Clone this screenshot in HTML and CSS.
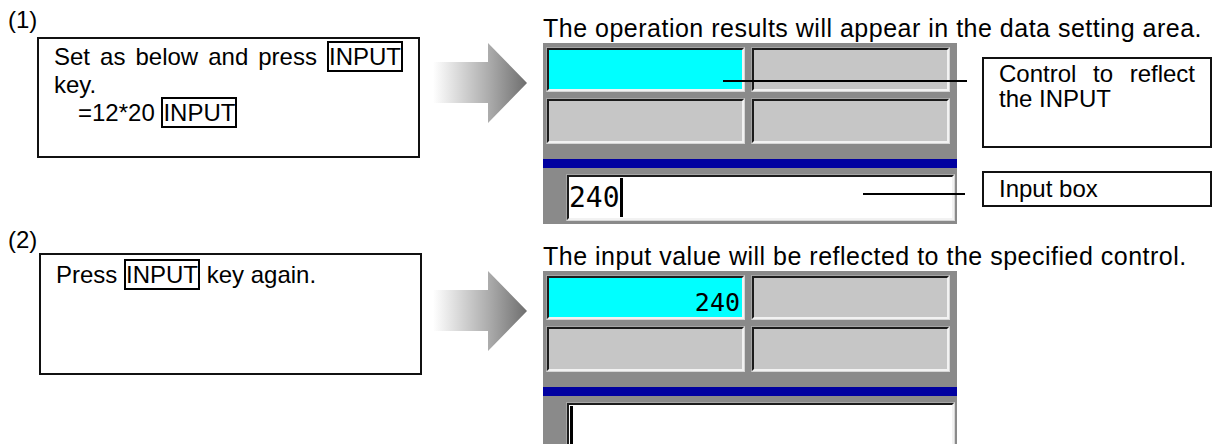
FILE: index.html
```html
<!DOCTYPE html>
<html lang="en">

<head>
    <meta charset="UTF-8">
    <meta name="viewport" content="width=device-width, initial-scale=1.0">
    <title>INPUT key operation</title>
    <link rel="stylesheet" href="styles.css">
</head>

<body>

    <div class="step">
        <div class="left">
            <div class="label">(1)</div>
            <div class="note">
                <p class="note-text">Set as below and press <span class="key">INPUT</span> key.</p>
                <p class="note-line">=12*20 <span class="key">INPUT</span></p>
            </div>
        </div>

        <svg class="arrow" width="95" height="81" viewBox="0 0 95 81">
            <defs>
                <linearGradient id="arrowFill1" x1="0" y1="0" x2="1" y2="0">
                    <stop offset="0" stop-color="#ffffff" />
                    <stop offset="0.6" stop-color="#ababab" />
                    <stop offset="1" stop-color="#6e6e6e" />
                </linearGradient>
            </defs>
            <polygon points="0,19 55,19 55,0 94,40 55,80 55,60 0,60" fill="url(#arrowFill1)" />
        </svg>

        <div class="right">
            <div class="title">The operation results will appear in the data setting area.</div>
            <div class="panel-wrap">
                <div class="panel">
                    <div class="grid">
                        <div class="cell"><div class="cell-in on"></div></div>
                        <div class="cell"><div class="cell-in"></div></div>
                        <div class="cell"><div class="cell-in"></div></div>
                        <div class="cell"><div class="cell-in"></div></div>
                    </div>
                    <div class="bar"></div>
                    <div class="field">
                        <div class="field-in">240<span class="cursor"></span></div>
                    </div>
                </div>

                <div class="callouts">
                    <div class="callout callout-big">Control to reflect the INPUT</div>
                    <div class="callout callout-small">Input box</div>
                </div>

                <span class="leader leader-1"></span>
                <span class="leader leader-2"></span>
            </div>
        </div>
    </div>

    <div class="step step-2">
        <div class="left">
            <div class="label">(2)</div>
            <div class="note">
                <p class="note-text">Press <span class="key">INPUT</span> key again.</p>
            </div>
        </div>

        <svg class="arrow" width="95" height="81" viewBox="0 0 95 81">
            <defs>
                <linearGradient id="arrowFill2" x1="0" y1="0" x2="1" y2="0">
                    <stop offset="0" stop-color="#ffffff" />
                    <stop offset="0.6" stop-color="#ababab" />
                    <stop offset="1" stop-color="#6e6e6e" />
                </linearGradient>
            </defs>
            <polygon points="0,19 55,19 55,0 94,40 55,80 55,60 0,60" fill="url(#arrowFill2)" />
        </svg>

        <div class="right">
            <div class="title">The input value will be reflected to the specified control.</div>
            <div class="panel-wrap">
                <div class="panel">
                    <div class="grid">
                        <div class="cell"><div class="cell-in on value">240</div></div>
                        <div class="cell"><div class="cell-in"></div></div>
                        <div class="cell"><div class="cell-in"></div></div>
                        <div class="cell"><div class="cell-in"></div></div>
                    </div>
                    <div class="bar"></div>
                    <div class="field">
                        <div class="field-in"><span class="cursor cursor-empty"></span></div>
                    </div>
                </div>
            </div>
        </div>
    </div>

</body>

</html>
```

FILE: styles.css
```css
* {
    margin: 0;
    box-sizing: border-box;
}

html, body {
    overflow: hidden;
}

body {
    background-color: white;
    color: black;
    font-family: "Liberation Sans", Arial, sans-serif;
}

.step {
    display: flex;
    height: 228px;
}

/* left side: step number and instruction box */
.left {
    width: 433px;
    flex: none;
}

.label {
    font-size: 24px;
    line-height: 26px;
    padding-left: 8px;
    margin-top: 7px;
}

.note {
    width: 383px;
    height: 121px;
    margin: 4px 0 0 37px;
    border: 2px solid #111;
    padding: 4px 15px 0;
    font-size: 24px;
    line-height: 28px;
}

.note-text {
    text-align: justify;
}

.note-line {
    padding-left: 24px;
}

.key {
    border: 2px solid black;
}

.step-2 .label {
    margin-top: -1px;
}

.step-2 .note {
    height: 122px;
    margin: 0 0 0 39px;
    padding-top: 6px;
}

.arrow {
    flex: none;
    margin-top: 43px;
}

/* right side: screen capture */
.right {
    flex: 1;
    margin-left: 15px;
}

.title {
    font-size: 25px;
    line-height: 30px;
    letter-spacing: 0.5px;
    padding-top: 13px;
    white-space: nowrap;
}

.panel-wrap {
    position: relative;
    display: flex;
    align-items: flex-start;
}

.panel {
    width: 414px;
    height: 181px;
    flex: none;
    background-color: #8a8a8a;
    padding-top: 4px;
}

.grid {
    display: grid;
    grid-template-columns: 1fr 1fr;
    grid-template-rows: 45px 46px;
    gap: 6px;
    margin: 0 7px 0 3px;
}

.cell, .field {
    border: 1px solid;
    border-color: #a6a6a6 #d6d6d6 #d6d6d6 #a6a6a6;
}

.cell-in, .field-in {
    height: 100%;
    border: 2px solid;
    border-color: #1c1c1c #f2f2f2 #f2f2f2 #1c1c1c;
    background-color: #c6c6c6;
}

.cell-in.on {
    background-color: #00ffff;
}

.value {
    display: flex;
    justify-content: flex-end;
    align-items: flex-end;
    padding: 0 2px 2px 0;
    font-family: "DejaVu Sans Mono", monospace;
    font-size: 25px;
    line-height: 1;
}

.bar {
    height: 9px;
    margin-top: 15px;
    background-color: #0000a0;
}

.field {
    height: 47px;
    margin: 6px 2px 0 23px;
}

.field-in {
    display: flex;
    align-items: center;
    background-color: white;
    font-family: "DejaVu Sans Mono", monospace;
    font-size: 28px;
    line-height: 1;
}

.cursor {
    width: 3px;
    height: 39px;
    background-color: black;
}

.cursor-empty {
    margin-left: 1px;
}

/* callout boxes and leader lines */
.callouts {
    width: 230px;
    margin: 14px 0 0 25px;
    display: flex;
    flex-direction: column;
    gap: 23px;
}

.callout {
    border: 2px solid #111;
    padding: 2px 15px 0;
    font-size: 24px;
    line-height: 25px;
}

.callout-big {
    height: 91px;
    text-align: justify;
}

.callout-small {
    height: 36px;
    padding-top: 3px;
}

.leader {
    position: absolute;
    height: 2px;
    background-color: black;
}

.leader-1 {
    left: 180px;
    top: 37px;
    width: 244px;
}

.leader-2 {
    left: 320px;
    top: 150px;
    width: 102px;
}
```
